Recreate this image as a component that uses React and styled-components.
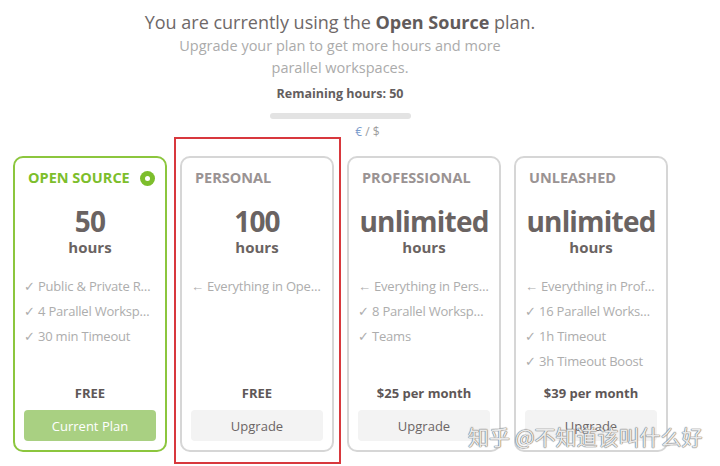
import styled, { createGlobalStyle } from "styled-components";

const GlobalStyle = createGlobalStyle`
  body {
    margin: 0;
    background: #ffffff;
    font-family: "Open Sans", "Noto Sans", sans-serif;
  }
`;

const Page = styled.div`
  position: relative;
  width: 720px;
  height: 466px;
  overflow: hidden;
`;

const Column = styled.div`
  width: 654px;
  margin-left: 13px;
  padding-top: 9px;
  display: flex;
  flex-direction: column;
  align-items: center;
`;

const Title = styled.h1`
  margin: 0;
  font-size: 18px;
  line-height: 26px;
  font-weight: 400;
  color: #6e6868;

  b {
    font-weight: 700;
    color: #625b5b;
  }
`;

const Subtitle = styled.p`
  margin: 0;
  width: 340px;
  text-align: center;
  font-size: 14.5px;
  line-height: 22px;
  color: #ababab;
`;

const Remaining = styled.div`
  margin-top: 6px;
  font-size: 12.5px;
  line-height: 18px;
  font-weight: 700;
  color: #645e5e;
`;

const Progress = styled.div`
  margin-top: 10px;
  width: 141px;
  height: 6px;
  border-radius: 3px;
  background: #e3e3e3;
`;

const Currency = styled.div`
  margin-top: 5px;
  margin-left: 55px;
  font-size: 12px;
  line-height: 16px;
  color: #9c9c9c;

  span {
    color: #7b9ccd;
  }
`;

const Cards = styled.div`
  margin-top: 16px;
  align-self: stretch;
  display: grid;
  grid-template-columns: repeat(4, 154px);
  gap: 13px;
`;

const Card = styled.div`
  height: 296px;
  box-sizing: border-box;
  border: 2px solid ${({ $active }) => ($active ? "#8cc63e" : "#d6d6d6")};
  border-radius: 10px;
  padding: 10px 9px 9px;
  display: flex;
  flex-direction: column;
`;

const CardHead = styled.div`
  display: flex;
  align-items: center;
  justify-content: space-between;
  padding: 0 1px 0 4px;
  font-size: 14.5px;
  line-height: 20px;
  font-weight: 700;
  color: ${({ $active }) => ($active ? "#7dbe2c" : "#9a9393")};
`;

const Radio = styled.span`
  width: 15px;
  height: 15px;
  border-radius: 50%;
  background: #7dbe2c;
  display: flex;
  align-items: center;
  justify-content: center;

  &::after {
    content: "";
    width: 5px;
    height: 5px;
    border-radius: 50%;
    background: #ffffff;
  }
`;

const Amount = styled.div`
  margin-top: 17px;
  text-align: center;
  font-size: 28px;
  line-height: 32px;
  letter-spacing: -0.8px;
  font-weight: 700;
  color: #6a6362;
`;

const Unit = styled.div`
  text-align: center;
  font-size: 15px;
  line-height: 20px;
  font-weight: 700;
  color: #6a6362;
`;

const Features = styled.ul`
  list-style: none;
  margin: 17px 0 0;
  padding: 0;
  flex: 1;
`;

const Feature = styled.li`
  font-size: 13px;
  line-height: 25px;
  letter-spacing: -0.2px;
  color: #adadad;
  white-space: nowrap;
  overflow: hidden;
  text-overflow: ellipsis;
`;

const Price = styled.div`
  text-align: center;
  font-size: 13px;
  line-height: 20px;
  font-weight: 700;
  color: #5e5757;
`;

const Button = styled.button`
  margin-top: 7px;
  height: 31px;
  border: none;
  border-radius: 4px;
  font-family: inherit;
  font-size: 13px;
  cursor: pointer;
  background: ${({ $current }) => ($current ? "#a9d082" : "#f3f3f3")};
  color: ${({ $current }) => ($current ? "#ffffff" : "#6b6565")};
`;

const Highlight = styled.div`
  position: absolute;
  left: 174px;
  top: 137px;
  width: 167px;
  height: 327px;
  box-sizing: border-box;
  border: 2px solid #d8383d;
  pointer-events: none;
`;

const Watermark = styled.div`
  position: absolute;
  left: 468px;
  top: 422px;
  font-family: "Noto Sans CJK SC", sans-serif;
  font-size: 21px;
  line-height: 28px;
  color: rgba(255, 255, 255, 0.85);
  text-shadow: 0 0 1px #777, 0 0 1px #777, 0 0 1px #777;
  white-space: nowrap;
`;

const plans = [
  {
    name: "Open Source",
    amount: "50",
    features: ["✓ Public & Private Repos", "✓ 4 Parallel Workspaces", "✓ 30 min Timeout"],
    price: "FREE",
    active: true,
  },
  {
    name: "Personal",
    amount: "100",
    features: ["← Everything in Open Source"],
    price: "FREE",
  },
  {
    name: "Professional",
    amount: "unlimited",
    features: ["← Everything in Personal", "✓ 8 Parallel Workspaces", "✓ Teams"],
    price: "$25 per month",
  },
  {
    name: "Unleashed",
    amount: "unlimited",
    features: [
      "← Everything in Professional",
      "✓ 16 Parallel Workspaces",
      "✓ 1h Timeout",
      "✓ 3h Timeout Boost",
    ],
    price: "$39 per month",
  },
];

export default function App() {
  return (
    <Page>
      <GlobalStyle />
      <Column>
        <Title>
          You are currently using the <b>Open Source</b> plan.
        </Title>
        <Subtitle>Upgrade your plan to get more hours and more parallel workspaces.</Subtitle>
        <Remaining>Remaining hours: 50</Remaining>
        <Progress />
        <Currency>
          <span>€</span> / $
        </Currency>
        <Cards>
          {plans.map((plan) => (
            <Card key={plan.name} $active={plan.active}>
              <CardHead $active={plan.active}>
                {plan.name.toUpperCase()}
                {plan.active && <Radio />}
              </CardHead>
              <Amount>{plan.amount}</Amount>
              <Unit>hours</Unit>
              <Features>
                {plan.features.map((f) => (
                  <Feature key={f}>{f}</Feature>
                ))}
              </Features>
              <Price>{plan.price}</Price>
              <Button $current={plan.active}>{plan.active ? "Current Plan" : "Upgrade"}</Button>
            </Card>
          ))}
        </Cards>
      </Column>
      <Highlight />
      <Watermark>知乎 @不知道该叫什么好</Watermark>
    </Page>
  );
}
